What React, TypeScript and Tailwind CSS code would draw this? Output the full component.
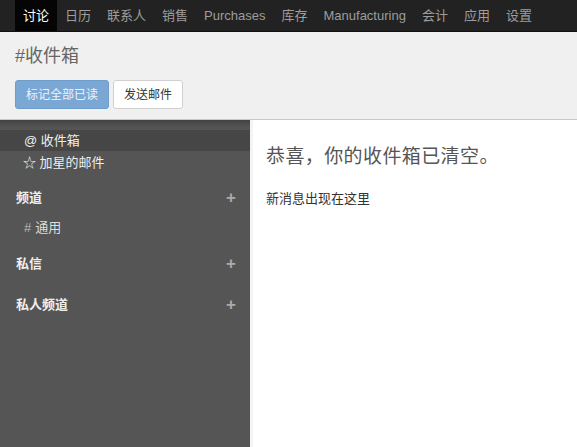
export default function App() {
  const nav = ['讨论', '日历', '联系人', '销售', 'Purchases', '库存', 'Manufacturing', '会计', '应用', '设置'];
  const font = { fontFamily: '"Liberation Sans", "Noto Sans CJK SC", sans-serif' };

  return (
    <div className="flex h-[447px] w-[577px] flex-col overflow-hidden bg-white" style={font}>
      {/* top menu */}
      <div className="flex h-[32px] shrink-0 items-stretch border-b border-[#111] bg-[#222] pl-[15px] text-[13px]">
        {nav.map((item, i) => (
          <div
            key={item}
            className={
              i === 0
                ? 'flex items-center bg-[#050505] px-[8px] text-white'
                : 'flex items-center px-[8px] text-[#9d9d9d]'
            }
          >
            {item}
          </div>
        ))}
      </div>

      {/* control panel */}
      <div className="shrink-0 border-b border-[#c8c8c8] bg-[#f0f0f0] px-[15px] pt-[11px] pb-[10px]">
        <div className="text-[18px] leading-[26px] text-[#666]">#收件箱</div>
        <div className="mt-[11px] flex gap-[4px] text-[12px]">
          <button className="h-[29px] rounded-[3px] border border-[#6e9ccb] bg-[#7aa7d4] px-[10px] text-[#eef3f8]">
            标记全部已读
          </button>
          <button className="h-[29px] rounded-[3px] border border-[#d0d0d0] bg-white px-[10px] text-[#333]">
            发送邮件
          </button>
        </div>
      </div>

      <div className="flex min-h-0 flex-1">
        {/* sidebar */}
        <div className="w-[250px] shrink-0 bg-[#555] pt-[10px] text-[13px] text-[#eee] shadow-[inset_0_8px_6px_-6px_rgba(0,0,0,0.3)]">
          <div className="flex h-[21px] items-center bg-[#464646] pl-[24px]">@ 收件箱</div>
          <div className="flex h-[23px] items-center pl-[23px]">☆ 加星的邮件</div>

          <div className="mt-[13px] flex h-[22px] items-center justify-between pl-[16px] pr-[14px] font-bold">
            <span>频道</span>
            <span className="text-[17px] text-[#aaa]">+</span>
          </div>
          <div className="mt-[9px] flex h-[20px] items-center pl-[24px] text-[#ddd]">
            <span className="mr-[4px] text-[#bbb]">#</span>通用
          </div>

          <div className="mt-[15px] flex h-[22px] items-center justify-between pl-[16px] pr-[14px] font-bold">
            <span>私信</span>
            <span className="text-[17px] text-[#aaa]">+</span>
          </div>

          <div className="mt-[19px] flex h-[22px] items-center justify-between pl-[16px] pr-[14px] font-bold">
            <span>私人频道</span>
            <span className="text-[17px] text-[#aaa]">+</span>
          </div>
        </div>

        {/* content */}
        <div className="flex-1 border-l-[3px] border-[#f4f4f4] bg-white pl-[13px] pt-[24px]">
          <div className="text-[19px] leading-[26px] tracking-[0.4px] text-[#555]">恭喜，你的收件箱已清空。</div>
          <div className="mt-[19px] text-[13px] text-[#333]">新消息出现在这里</div>
        </div>
      </div>
    </div>
  );
}
